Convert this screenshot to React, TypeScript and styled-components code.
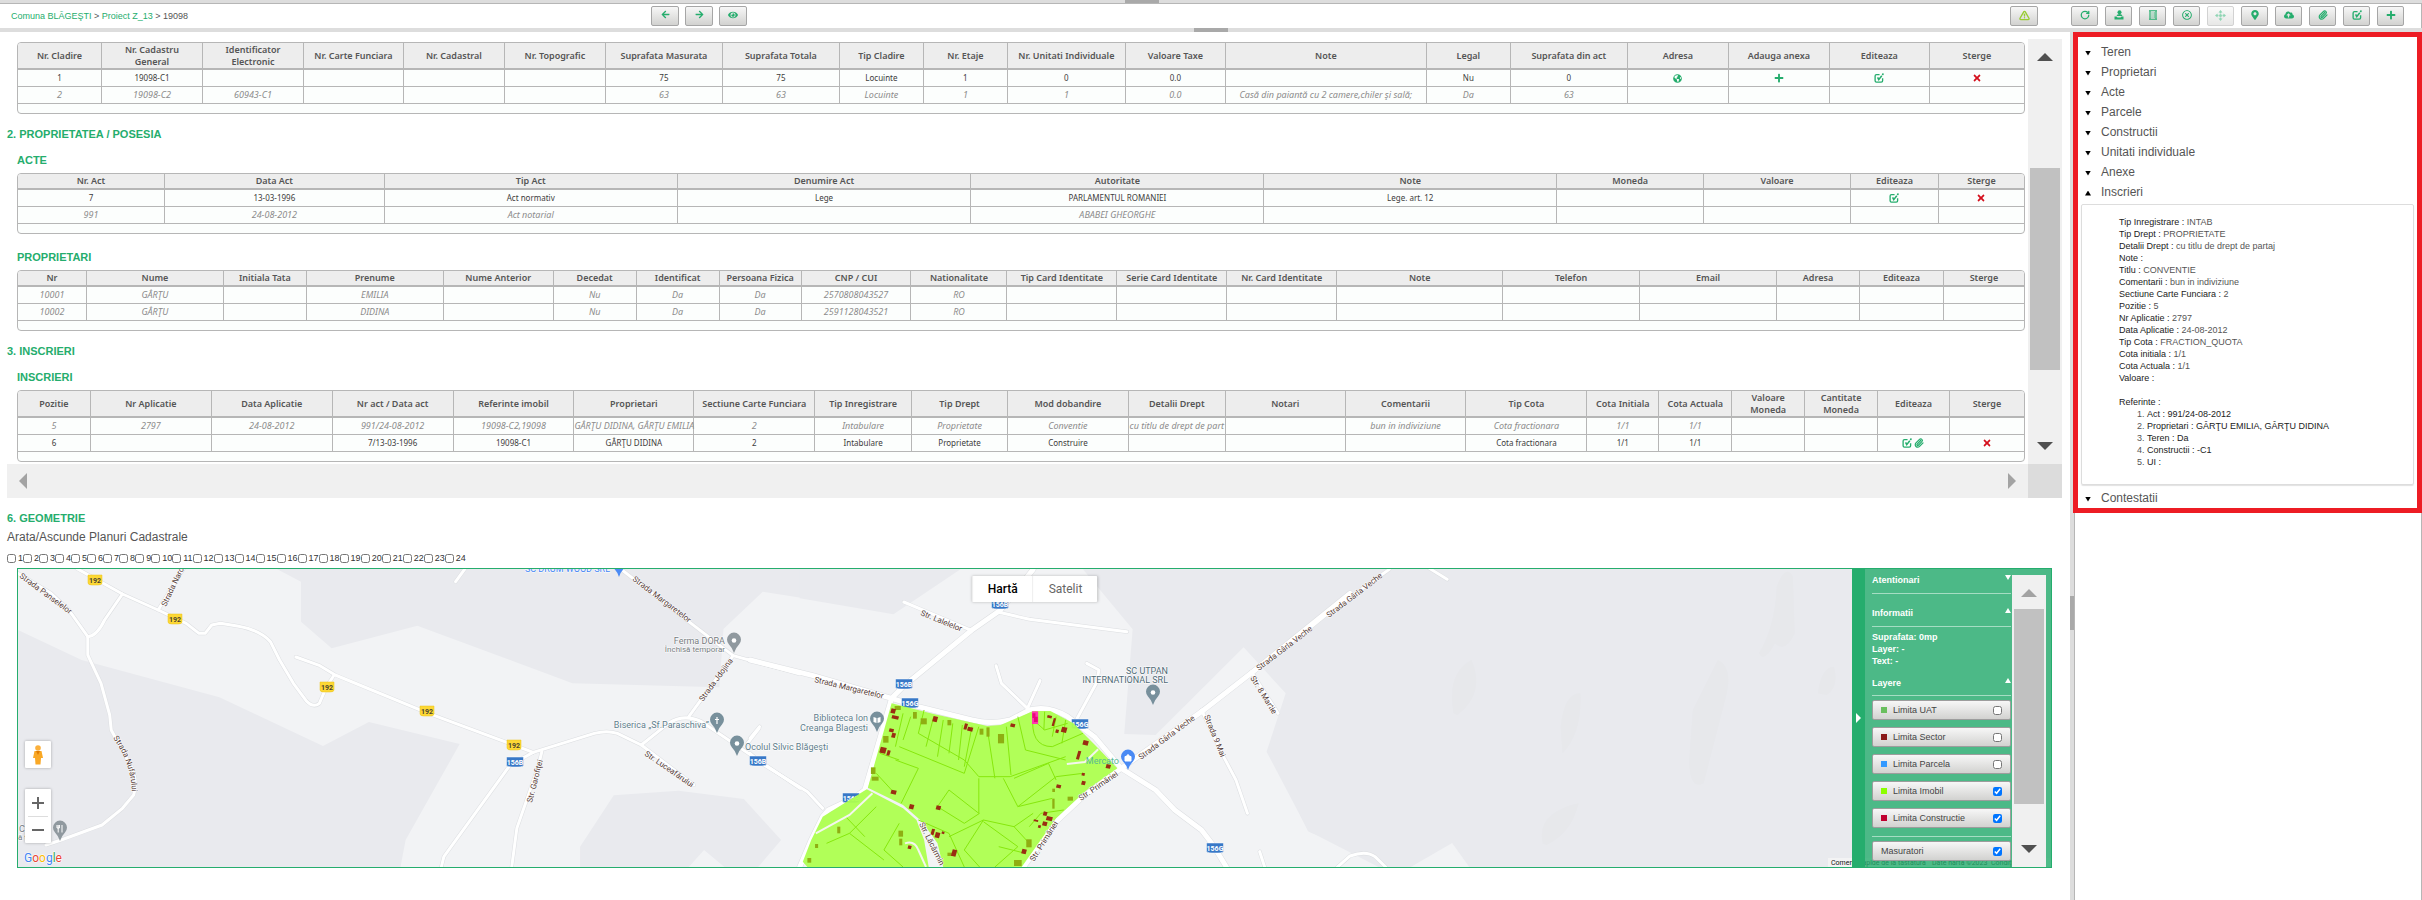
import React, { useState } from "react";
import type { ReactNode } from "react";
import styled, { createGlobalStyle, css } from "styled-components";
import {
  FaArrowLeft,
  FaArrowRight,
  FaCloudUploadAlt,
  FaEye,
  FaGlobeAmericas,
  FaMapMarkerAlt,
  FaPlus,
  FaRegTimesCircle,
  FaTimes,
} from "react-icons/fa";
import { Paperclip, RotateCw, TriangleAlert } from "lucide-react";

const green = "#25ad6d";
const line = "#b6b6b6";

const GlobalStyle = createGlobalStyle`
  * { box-sizing: border-box; }
  body { margin: 0; background: #fff; color: #555; font: 12px/16px "Liberation Sans", Arial, sans-serif; }
  button { font: inherit; color: inherit; padding: 0; cursor: pointer; }
  h2, h3, h4, ul, ol, p { margin: 0; }
`;

/* ---------- shell ---------- */

const Page = styled.div`
  display: flex;
  flex-direction: column;
  min-height: 100vh;
`;

const Splitter = styled.div<{ $lined?: boolean }>`
  display: flex;
  justify-content: center;
  height: 4px;
  background: #ddd;
  ${(p) => p.$lined && css`border-bottom: 1px solid ${line}; padding-right: 138px;`}
`;

const Grip = styled.span`
  width: 34px;
  background: #a9a9a9;
`;

const TopBar = styled.header`
  display: flex;
  align-items: center;
  height: 24px;
  padding: 0 17px 0 11px;
  border-right: 1px solid ${line};
`;

const Crumbs = styled.nav`
  flex: 0 0 640px;
  font-size: 9px;
  line-height: 12px;
  a { color: ${green}; text-decoration: none; }
`;

const Tools = styled.div<{ $gap: number; $apart?: boolean }>`
  display: flex;
  gap: ${(p) => p.$gap}px;
  ${(p) => p.$apart && css`margin-left: auto; margin-right: 33px;`}
`;

const ToolButton = styled.button<{ $wide?: boolean; $tone?: string }>`
  display: flex;
  justify-content: center;
  align-items: flex-start;
  width: ${(p) => (p.$wide ? 28 : 27)}px;
  height: 20px;
  padding-top: 3px;
  border: 1px solid #a6a6a6;
  border-radius: 2px;
  background: linear-gradient(#f7f7f7, #d2d2d0);
  color: ${(p) => p.$tone ?? green};
  &:disabled { opacity: 0.5; }
`;

const Main = styled.main`
  display: flex;
  flex: 1;
`;

const Content = styled.div`
  flex: 1;
  min-width: 0;
  padding: 7px 8px 0 7px;
`;

const Divider = styled.div`
  position: relative;
  width: 3px;
  background: #ddd;
`;

const SideGrip = styled.span`
  position: absolute;
  top: 564px;
  left: 0;
  width: 4px;
  height: 34px;
  background: #a9a9a9;
`;

/* ---------- scrolling box ---------- */

const ScrollBox = styled.div`
  display: grid;
  grid-template-columns: 1fr 34px;
  grid-template-rows: auto 34px;
`;

const ScrollBody = styled.div`
  min-width: 0;
  padding: 3px 3px 2px 10px;
`;

const VBar = styled.div`
  display: flex;
  flex-direction: column;
  align-items: center;
  justify-content: space-between;
  padding: 14px 0;
  background: #f0f0f0;
`;

const HBar = styled.div`
  display: flex;
  align-items: center;
  justify-content: space-between;
  padding: 0 12px;
  background: #f0f0f0;
`;

const Corner = styled.div`
  background: #dcdcdc;
`;

const Thumb = styled.span<{ $size: number }>`
  width: 30px;
  flex: ${(p) => p.$size} 0 0;
  background: #c1c1c1;
`;

const Space = styled.span<{ $grow: number }>`
  flex: ${(p) => p.$grow} 0 0;
`;

const Arrow = styled.button<{ $dir: "up" | "down" | "left" | "right"; $size?: number; $color?: string }>`
  width: 0;
  height: 0;
  background: none;
  border: ${(p) => p.$size ?? 8}px solid transparent;
  ${(p) => {
    const c = p.$color ?? "#505050";
    const side = { up: "bottom", down: "top", left: "right", right: "left" }[p.$dir];
    const back = { up: "top", down: "bottom", left: "left", right: "right" }[p.$dir];
    return css`border-${side}-color: ${c}; border-${back}-width: 0;`;
  }}
`;

/* ---------- tables ---------- */

const SectionTitle = styled.h2`
  margin: 13px 0 0 -10px;
  color: ${green};
  font-size: 11px;
  line-height: 14px;
`;

const GeoTitle = styled(SectionTitle)`
  margin-left: 0;
`;

const TableTitle = styled.h3<{ $far?: boolean }>`
  margin: ${(p) => (p.$far ? 16 : 12)}px 0 6px;
  color: ${green};
  font-size: 11px;
  line-height: 14px;
`;

const TableFrame = styled.div`
  padding-bottom: 9px;
  border: 1px solid ${line};
  border-radius: 4px;
  background: #fcfefd;
  overflow: hidden;
`;

const DataTable = styled.table`
  width: 100%;
  table-layout: fixed;
  border-collapse: separate;
  border-spacing: 0;
  font-family: "Noto Sans", "Open Sans", sans-serif;
`;

const Th = styled.th<{ $tall?: boolean }>`
  height: ${(p) => (p.$tall ? 27 : 16)}px;
  padding: 0;
  border-right: 1px solid ${line};
  border-bottom: 2px solid ${line};
  background: #ededed;
  color: #555;
  font-size: 9px;
  font-weight: 600;
  line-height: 12px;
  &:last-child { border-right: 0; }
`;

const Td = styled.td`
  height: 17px;
  padding: 0;
  border-right: 1px solid ${line};
  border-bottom: 1px solid ${line};
  line-height: 12px;
  text-align: center;
  white-space: nowrap;
  &:last-child { border-right: 0; }
`;

const Tr = styled.tr<{ $muted?: boolean }>`
  color: ${(p) => (p.$muted ? "#8c8c8c" : "#3c3c3c")};
  font-size: ${(p) => (p.$muted ? 9 : 8)}px;
  font-style: ${(p) => (p.$muted ? "italic" : "normal")};
`;

const Actions = styled.span`
  display: flex;
  justify-content: center;
  gap: 2px;
`;

const IconButton = styled.button<{ $danger?: boolean }>`
  display: flex;
  border: 0;
  background: none;
  color: ${(p) => (p.$danger ? "#d40f1c" : green)};
`;

/* ---------- geometry ---------- */

const GeoLabel = styled.p`
  margin-top: 4px;
`;

const PlanRow = styled.div`
  display: flex;
  margin-top: 7px;
  margin-bottom: 4px;
  font-size: 9px;
  line-height: 12px;
  color: #333;
`;

const Plan = styled.label`
  display: flex;
  align-items: center;
  gap: 2px;
`;

const Tick = styled.input`
  width: 9px;
  height: 9px;
  margin: 0;
`;

const MapFrame = styled.section`
  position: relative;
  margin: 0 10px;
  border: 1px solid ${green};
  height: 300px;
  overflow: hidden;
`;

const MapArt = styled.svg`
  display: block;
  width: 100%;
  height: 100%;
`;

const MapType = styled.div`
  position: absolute;
  top: 7px;
  left: 50%;
  transform: translateX(-50%);
  display: flex;
  border-radius: 1px;
  background: #fff;
  box-shadow: 0 0 3px rgba(0, 0, 0, 0.25);
  font: 12px/26px Roboto, sans-serif;
`;

const TypeButton = styled.button<{ $active?: boolean }>`
  padding: 0 15px;
  border: 0;
  border-left: 1px solid #eee;
  background: none;
  color: ${(p) => (p.$active ? "#000" : "#666")};
  font-weight: ${(p) => (p.$active ? 500 : 400)};
`;

const MapControls = styled.div`
  position: absolute;
  left: 7px;
  bottom: 24px;
  display: flex;
  flex-direction: column;
  gap: 21px;
`;

const ControlCard = styled.div`
  display: flex;
  flex-direction: column;
  align-items: center;
  width: 26px;
  border-radius: 1px;
  background: #fff;
  box-shadow: 0 0 3px rgba(0, 0, 0, 0.3);
`;

const ControlButton = styled.button`
  display: flex;
  align-items: center;
  justify-content: center;
  width: 20px;
  height: 27px;
  border: 0;
  background: none;
  & + & { border-top: 1px solid #ddd; }
`;

const LayerPanel = styled.aside`
  position: absolute;
  top: 0;
  right: 0;
  bottom: 0;
  display: flex;
  width: 199px;
  background: rgba(36, 173, 109, 0.8);
  color: #fff;
`;

const PanelHandle = styled.div`
  display: flex;
  align-items: center;
  justify-content: center;
  width: 13px;
  background: ${green};
`;

const PanelBody = styled.div`
  flex: 1;
  padding: 3px 0 0 7px;
`;

const PanelHead = styled.h4<{ $gap?: number; $rule?: number }>`
  display: flex;
  justify-content: space-between;
  margin-top: ${(p) => p.$gap ?? 0}px;
  padding-bottom: ${(p) => p.$rule ?? 5}px;
  border-bottom: 1px solid #a5ddc3;
  font-size: 9px;
  line-height: 16px;
`;

const PanelMark = styled.span<{ $open?: boolean }>`
  width: 6px;
  height: 5px;
  margin-top: 3px;
  background: #fff;
  clip-path: ${(p) => (p.$open ? "polygon(50% 0, 100% 100%, 0 100%)" : "polygon(0 0, 100% 0, 50% 100%)")};
`;

const PanelInfo = styled.div`
  padding-top: 4px;
  font-size: 9px;
  font-weight: 700;
  line-height: 12px;
`;

const LayerRow = styled.label`
  display: flex;
  align-items: center;
  height: 20px;
  margin-top: 7px;
  padding: 0 8px;
  border: 1px solid #9d9d9d;
  border-radius: 2px;
  background: linear-gradient(#f7f7f7, #d2d2d0);
  color: #444;
  font-size: 9px;
  line-height: 12px;
  ${PanelHead} + &, hr + & { margin-top: 4px; }
`;

const Swatch = styled.span<{ $color: string }>`
  width: 6px;
  height: 6px;
  margin-right: 6px;
  background: ${(p) => p.$color};
`;

const LayerTick = styled(Tick)`
  margin-left: auto;
`;

const PanelRule = styled.hr`
  height: 1px;
  margin: 8px 0 0;
  border: 0;
  background: #a5ddc3;
`;

const PanelScroll = styled(VBar)`
  width: 34px;
  margin: 6px 5px 0 1px;
`;

/* ---------- side panel ---------- */

const Side = styled.aside`
  display: flex;
  flex-direction: column;
  width: 349px;
`;

const SideBox = styled.div`
  padding: 5px 3px 0;
  border: 5px solid #ed1c24;
`;

const SideRest = styled.div`
  flex: 1;
  border-left: 1px solid #ddd;
  border-right: 1px solid ${line};
  box-shadow: inset 1px 0 ${line};
`;

const SideItem = styled.button<{ $open?: boolean }>`
  display: flex;
  align-items: center;
  gap: 10px;
  width: 100%;
  height: 20px;
  padding-left: 4px;
  border: 0;
  background: none;
  text-align: left;
  &::before {
    content: "";
    width: 6px;
    height: 5px;
    margin-top: 2px;
    background: #000;
    clip-path: ${(p) => (p.$open ? "polygon(50% 0, 100% 100%, 0 100%)" : "polygon(0 0, 100% 0, 50% 100%)")};
  }
`;

const SideCard = styled.div`
  margin: 2px 0 3px;
  padding: 11px 0 16px 37px;
  border: 1px solid #ddd;
  border-radius: 2px;
  box-shadow: 0 1px 1px #e2e2e2;
  font-size: 9px;
  line-height: 12px;
  color: #555;
  b { color: #222; font-weight: 400; }
`;

const RefTitle = styled.p`
  margin-top: 12px;
`;

const RefList = styled.ol`
  padding-left: 28px;
`;

/* ---------- small icons ---------- */

const EditIcon = ({ size = 10 }: { size?: number }) => (
  <svg width={size} height={size} viewBox="0 0 18 18" fill="none" stroke="currentColor" strokeWidth="2.400">
    <path d="M10 3H4.500Q2 3 2 5.500V14Q2 16.500 4.500 16.500H13Q15.500 16.500 15.500 14V9.500" />
    <path d="M6.500 8L8.500 12L14 5" strokeWidth="2.800" />
    <path d="M15 3.500L17 1" strokeWidth="2.800" />
  </svg>
);

const PersonTray = () => (
  <svg width="10" height="10" viewBox="0 0 20 20" fill="currentColor">
    <circle cx="11" cy="4.500" r="4" />
    <path d="M5 12Q6 8 11 8Q16 8 17 12Z" />
    <path d="M1 13H5L7 15H13L15 13H19V19H1Z" />
  </svg>
);

const ListIcon = () => (
  <svg width="10" height="10" viewBox="0 0 20 20" fill="none" stroke="currentColor" strokeWidth="2.400">
    <path d="M2 1.500H18M2 18.500H18M4 2V18M16 2V18M7 6H9M11 6H14M7 10H9M11 10H14M7 14H9M11 14H14" />
  </svg>
);

const MoveIcon = () => (
  <svg width="11" height="11" viewBox="0 0 22 22" fill="currentColor">
    <path d="M11 0L15 5H12.500V7H9.500V5H7ZM11 22L15 17H12.500V15H9.500V17H7ZM0 11L5 7V9.500H7V12.500H5V15ZM22 11L17 7V9.500H15V12.500H17V15Z" />
    <circle cx="11" cy="11" r="3" />
  </svg>
);

/* ---------- data ---------- */

type Cell = string | ReactNode;
interface Grid {
  name: string;
  tall?: boolean;
  cols: [string, number][];
  rows: { muted?: boolean; cells: Record<string, Cell> }[];
}

const edit = <IconButton aria-label="Editeaza"><EditIcon /></IconButton>;
const remove = <IconButton $danger aria-label="Sterge"><FaTimes size={10} /></IconButton>;

const cladiri: Grid = {
  name: "Cladiri",
  tall: true,
  cols: [
    ["Nr. Cladire", 84], ["Nr. Cadastru General", 101], ["Identificator Electronic", 101], ["Nr. Carte Funciara", 100],
    ["Nr. Cadastral", 101], ["Nr. Topografic", 101], ["Suprafata Masurata", 117], ["Suprafata Totala", 117],
    ["Tip Cladire", 84], ["Nr. Etaje", 84], ["Nr. Unitati Individuale", 118], ["Valoare Taxe", 100], ["Note", 201],
    ["Legal", 84], ["Suprafata din act", 117], ["Adresa", 101], ["Adauga anexa", 101], ["Editeaza", 100], ["Sterge", 94],
  ],
  rows: [
    {
      cells: {
        "Nr. Cladire": "1", "Nr. Cadastru General": "19098-C1", "Suprafata Masurata": "75", "Suprafata Totala": "75",
        "Tip Cladire": "Locuinte", "Nr. Etaje": "1", "Nr. Unitati Individuale": "0", "Valoare Taxe": "0.0", Legal: "Nu",
        "Suprafata din act": "0",
        Adresa: <IconButton aria-label="Adresa"><FaGlobeAmericas size={9} /></IconButton>,
        "Adauga anexa": <IconButton aria-label="Adauga anexa"><FaPlus size={10} /></IconButton>,
        Editeaza: edit, Sterge: remove,
      },
    },
    {
      muted: true,
      cells: {
        "Nr. Cladire": "2", "Nr. Cadastru General": "19098-C2", "Identificator Electronic": "60943-C1",
        "Suprafata Masurata": "63", "Suprafata Totala": "63", "Tip Cladire": "Locuinte", "Nr. Etaje": "1",
        "Nr. Unitati Individuale": "1", "Valoare Taxe": "0.0", Note: "Casă din paiantă cu 2 camere,chiler şi sală;",
        Legal: "Da", "Suprafata din act": "63",
      },
    },
  ],
};

const acte: Grid = {
  name: "Acte",
  cols: [
    ["Nr. Act", 147], ["Data Act", 220], ["Tip Act", 293], ["Denumire Act", 294], ["Autoritate", 293], ["Note", 293],
    ["Moneda", 147], ["Valoare", 147], ["Editeaza", 88], ["Sterge", 85],
  ],
  rows: [
    {
      cells: {
        "Nr. Act": "7", "Data Act": "13-03-1996", "Tip Act": "Act normativ", "Denumire Act": "Lege",
        Autoritate: "PARLAMENTUL ROMANIEI", Note: "Lege. art. 12", Editeaza: edit, Sterge: remove,
      },
    },
    { muted: true, cells: { "Nr. Act": "991", "Data Act": "24-08-2012", "Tip Act": "Act notarial", Autoritate: "ABABEI GHEORGHE" } },
  ],
};

const proprietari: Grid = {
  name: "Proprietari",
  cols: [
    ["Nr", 69], ["Nume", 137], ["Initiala Tata", 83], ["Prenume", 137], ["Nume Anterior", 110], ["Decedat", 83],
    ["Identificat", 83], ["Persoana Fizica", 82], ["CNP / CUI", 110], ["Nationalitate", 96], ["Tip Card Identitate", 110],
    ["Serie Card Identitate", 110], ["Nr. Card Identitate", 110], ["Note", 166], ["Telefon", 137], ["Email", 137],
    ["Adresa", 83], ["Editeaza", 84], ["Sterge", 80],
  ],
  rows: [
    ["10001", "EMILIA", "2570808043527"],
    ["10002", "DIDINA", "2591128043521"],
  ].map(([nr, prenume, cnp]) => ({
    muted: true,
    cells: {
      Nr: nr, Nume: "GÂRŢU", Prenume: prenume, Decedat: "Nu", Identificat: "Da", "Persoana Fizica": "Da",
      "CNP / CUI": cnp, Nationalitate: "RO",
    },
  })),
};

const inscrieri: Grid = {
  name: "Inscrieri",
  tall: true,
  cols: [
    ["Pozitie", 73], ["Nr Aplicatie", 121], ["Data Aplicatie", 121], ["Nr act / Data act", 121], ["Referinte imobil", 121],
    ["Proprietari", 120], ["Sectiune Carte Funciara", 121], ["Tip Inregistrare", 97], ["Tip Drept", 96],
    ["Mod dobandire", 121], ["Detalii Drept", 97], ["Notari", 120], ["Comentarii", 121], ["Tip Cota", 121],
    ["Cota Initiala", 72], ["Cota Actuala", 73], ["Valoare Moneda", 73], ["Cantitate Moneda", 73], ["Editeaza", 72], ["Sterge", 74],
  ],
  rows: [
    {
      muted: true,
      cells: {
        Pozitie: "5", "Nr Aplicatie": "2797", "Data Aplicatie": "24-08-2012", "Nr act / Data act": "991/24-08-2012",
        "Referinte imobil": "19098-C2,19098", Proprietari: "GÂRŢU DIDINA, GÂRŢU EMILIA", "Sectiune Carte Funciara": "2",
        "Tip Inregistrare": "Intabulare", "Tip Drept": "Proprietate", "Mod dobandire": "Conventie",
        "Detalii Drept": "cu titlu de drept de part", Comentarii: "bun in indiviziune", "Tip Cota": "Cota fractionara",
        "Cota Initiala": "1/1", "Cota Actuala": "1/1",
      },
    },
    {
      cells: {
        Pozitie: "6", "Nr act / Data act": "7/13-03-1996", "Referinte imobil": "19098-C1", Proprietari: "GÂRŢU DIDINA",
        "Sectiune Carte Funciara": "2", "Tip Inregistrare": "Intabulare", "Tip Drept": "Proprietate",
        "Mod dobandire": "Construire", "Tip Cota": "Cota fractionara", "Cota Initiala": "1/1", "Cota Actuala": "1/1",
        Editeaza: <>{edit}<IconButton aria-label="Ataseaza"><Paperclip size={10} strokeWidth={3} /></IconButton></>,
        Sterge: remove,
      },
    },
  ],
};

const details: [string, string][] = [
  ["Tip Inregistrare", "INTAB"], ["Tip Drept", "PROPRIETATE"], ["Detalii Drept", "cu titlu de drept de partaj"],
  ["Note", ""], ["Titlu", "CONVENTIE"], ["Comentarii", "bun in indiviziune"], ["Sectiune Carte Funciara", "2"],
  ["Pozitie", "5"], ["Nr Aplicatie", "2797"], ["Data Aplicatie", "24-08-2012"], ["Tip Cota", "FRACTION_QUOTA"],
  ["Cota initiala", "1/1"], ["Cota Actuala", "1/1"], ["Valoare", ""],
];

const references = [
  "Act : 991/24-08-2012",
  "Proprietari : GÂRŢU EMILIA, GÂRŢU DIDINA",
  "Teren : Da",
  "Constructii : -C1",
  "UI :",
];

const layers: [string, string, boolean][] = [
  ["Limita UAT", "#6abf5e", false],
  ["Limita Sector", "#8b1a1a", false],
  ["Limita Parcela", "#3399ff", false],
  ["Limita Imobil", "#8cff00", true],
  ["Limita Constructie", "#c0002f", true],
];

function GridTable({ grid }: { grid: Grid }) {
  const total = grid.cols.reduce((sum, [, w]) => sum + w, 0);
  return (
    <TableFrame>
      <DataTable aria-label={grid.name}>
        <colgroup>
          {grid.cols.map(([name, w]) => (
            <col key={name} style={{ width: `${(w / total) * 100}%` }} />
          ))}
        </colgroup>
        <thead>
          <tr>
            {grid.cols.map(([name]) => (
              <Th key={name} $tall={grid.tall}>
                {/(Cadastru|Identificator|Valoare Moneda|Cantitate)/.test(name) ? (
                  <>{name.slice(0, name.lastIndexOf(" "))}<br />{name.slice(name.lastIndexOf(" ") + 1)}</>
                ) : name}
              </Th>
            ))}
          </tr>
        </thead>
        <tbody>
          {grid.rows.map((row, i) => (
            <Tr key={i} $muted={row.muted}>
              {grid.cols.map(([name]) => {
                const cell = row.cells[name];
                return <Td key={name}>{cell && typeof cell !== "string" ? <Actions>{cell}</Actions> : cell}</Td>;
              })}
            </Tr>
          ))}
        </tbody>
      </DataTable>
    </TableFrame>
  );
}

/* ---------- map drawing ---------- */

// The terrain is drawn as three sheets, each with its own grid units.
const west = "translate(0 560) scale(0.5102 0.33333)";
const centre = "translate(750 560) scale(0.38265 0.33333)";
const east = "translate(1300 560) scale(0.35714 0.33333)";

const westRoads = [
  "M150 25L240 102L310 150L365 190L390 220H402L415 195L432 190L465 198Q510 210 530 245L548 300L575 370L600 422Q614 445 626 430L640 380L655 345",
  "M580 291L627 317L657 345L840 460L1045 577",
  "M240 102L205 180Q190 228 172 230L135 150L100 100L35 40",
  "M172 230V285L198 370L215 465L218 510L250 600Q272 650 262 705L240 745L200 795L120 840L90 855",
  "M310 150L360 25",
  "M1045 577L1000 615L870 890L865 921",
  "M1045 577L1165 520Q1190 510 1210 520L1257 555L1360 675",
  "M1062 575L1055 620L1013 805L1003 921",
  "M1257 555L1310 490Q1340 460 1375 485L1568 685",
  "M1350 470L1437 287L1350 185L1215 25",
  "M1437 287L1568 342",
  "M1488 505L1465 550",
  "M893 65L912 25",
];
const centreRoads = [
  "M0 580L30 610L150 695L190 745",
  "M402 126L580 212",
  "M645 155L730 178L985 215",
  "M643 317L657 370L725 445L758 362",
  "M880 310L912 330L905 370L855 475",
  "M1310 335L1380 460",
  "M1180 450L1240 595L1270 660L1300 760",
  "M0 535L25 500",
  "M1332 875L1345 921",
];
const centreMain = [
  "M0 300L165 347L370 415L440 440L580 480Q630 495 680 480L730 450Q780 435 830 470L900 530L970 625L1060 690L1110 750L1180 810L1210 855L1245 921",
  "M740 28L655 150L580 210L400 380L370 415L300 690L270 715L205 750L190 770L160 840L130 921",
  "M970 625L870 710L800 785L715 921",
  "M970 625L1180 455L1320 330L1568 100",
];
const parcels =
  "M455 450L440 520L560 600L598 650L680 650L825 590M390 560L560 640L598 500M620 505L640 655M670 500L682 645M700 470L720 570L825 600M740 460Q730 560 790 560L870 520M750 490L770 510L830 490M770 455L768 510M800 470L790 530M825 480L815 550M598 655V760L520 690L490 740L560 790L600 760M662 655L700 740L790 715M700 740L800 650L870 640M690 655L780 610L800 660M440 780L520 820L560 921M520 830L610 780L690 800L740 760M610 780L560 870L600 921M610 785L700 860L640 921M690 800L730 850M400 460L380 560M420 470L400 540M480 470L460 560M505 480L490 590M530 490L520 580M555 495L545 600M580 500L560 620M380 600L440 625L395 730M340 580L390 600M330 640L370 690M650 860L720 880M730 800L760 760L820 750M330 740L260 820L350 900M200 850L260 820M390 790L350 870L400 921M250 770L300 830";
const buildings: [number, number, number, number][] = [
  [370, 445, 12, 14], [372, 465, 18, 10], [365, 505, 12, 10], [372, 518, 10, 14], [342, 560, 16, 18], [360, 570, 8, 16],
  [480, 468, 12, 16], [562, 490, 8, 18], [570, 500, 14, 12], [682, 490, 12, 10], [778, 465, 12, 8], [794, 474, 6, 24],
  [816, 500, 14, 16], [800, 508, 8, 10], [872, 540, 14, 14], [858, 572, 8, 26], [932, 612, 12, 12], [868, 638, 8, 8],
  [868, 662, 10, 12], [802, 673, 12, 10], [370, 689, 14, 12], [418, 732, 12, 14], [488, 736, 12, 12], [476, 806, 8, 18],
  [486, 816, 12, 16], [502, 814, 7, 7], [768, 754, 10, 12], [776, 768, 16, 12], [766, 784, 12, 12], [742, 778, 12, 5],
  [754, 795, 7, 8], [530, 868, 12, 20], [414, 856, 9, 10], [712, 866, 12, 14],
];
const sheds: [number, number, number, number][] = [
  [378, 438, 16, 12], [426, 456, 10, 20], [446, 475, 16, 18], [516, 480, 10, 16], [600, 506, 10, 18], [618, 502, 8, 28],
  [648, 522, 16, 28], [348, 528, 14, 20], [316, 622, 12, 20], [318, 650, 18, 12], [830, 710, 14, 12], [790, 686, 7, 10],
  [790, 716, 6, 30], [388, 812, 12, 18], [390, 836, 8, 20], [516, 878, 12, 10], [722, 838, 14, 24], [690, 900, 20, 18],
  [228, 800, 8, 20], [170, 852, 8, 12], [150, 894, 10, 14],
];

const streets: [string, number, number, number, number][] = [
  ["Strada Panselelor", 19, 577, 69, 614],
  ["Strada Narc", 166, 607, 185, 567],
  ["Strada Margaretelor", 632, 580, 690, 624],
  ["Strada Jdojina", 703, 702, 733, 661],
  ["Str. Luceafărului", 644, 755, 692, 788],
  ["Str. Garofiţei", 532, 803, 543, 760],
  ["Str. Lalelelor", 920, 615, 964, 633],
  ["Strada Margaretelor", 814, 682, 884, 699],
  ["Strada Gârla Veche", 1259, 671, 1314, 629],
  ["Strada Gârla Veche", 1141, 760, 1197, 718],
  ["Strada Gârla Veche", 1329, 618, 1384, 576],
  ["Str. 8 Martie", 1250, 678, 1273, 715],
  ["Strada 9 Mai", 1204, 716, 1221, 758],
  ["Str. Primăriei", 1081, 801, 1119, 775],
  ["Str. Primăriei", 1034, 862, 1058, 824],
  ["Str. Lăcărmin", 919, 824, 941, 868],
];

const Street = ({ text, x1, y1, x2, y2 }: { text: string; x1: number; y1: number; x2: number; y2: number }) => (
  <text transform={`translate(${x1} ${y1}) rotate(${(Math.atan2(y2 - y1, x2 - x1) * 180) / Math.PI})`}>{text}</text>
);

const Shield = ({ x, y, text, county }: { x: number; y: number; text: string; county?: boolean }) => {
  const w = county ? 14 : 17;
  return (
    <g>
      <path
        d={`M${x - w / 2} ${y - 5}H${x + w / 2}V${y + 3}Q${x + w / 2} ${y + 5} ${x + 3} ${y + 5}H${x - 3}Q${x - w / 2} ${y + 5} ${x - w / 2} ${y + 3}Z`}
        fill={county ? "#fdd835" : "#3878c7"}
        stroke={county ? "#e9c11c" : "#fff"}
        strokeWidth="0.5"
      />
      <text x={x} y={y + 3} textAnchor="middle" fontSize="7" fontWeight="700" fill={county ? "#4a4430" : "#fff"}>{text}</text>
    </g>
  );
};

const Pin = ({ x, y, color, children }: { x: number; y: number; color: string; children?: ReactNode }) => (
  <g transform={`translate(${x} ${y})`}>
    <path d="M0 19Q-1.500 14 -5 10.500A7 7 0 1 1 5 10.500Q1.500 14 0 19Z" fill={color} />
    {children ?? <circle cy="6.500" r="2.300" fill="#fff" />}
  </g>
);

function VillageMap() {
  return (
    <MapArt viewBox="18 569 2033 298" preserveAspectRatio="xMinYMin slice" fontFamily="Roboto, sans-serif" role="img" aria-label="Harta">
      <rect x="18" y="569" width="2033" height="298" fill="#f2f3f5" />
      <g fill="#e9eaee">
        <path transform={west} d="M540 25L590 65V185L650 265L818 197L1122 370L1410 382L1418 207L1495 95L1620 125V25ZM35 210L160 300L430 412L633 558L723 486L901 552L795 840L785 921H35ZM1137 921V860L1203 706L1330 692L1458 717L1531 840L1486 921H1420L1380 870L1350 921Z" />
        <path transform={centre} d="M130 28H550L375 163L130 115ZM870 28L1000 208L978 522L1060 525L1290 262L1400 400L1350 575L1460 815L1568 865V28Z" />
        <path transform={east} d="M0 25H2200V921H220L22 812L0 765Z" />
      </g>
      <path transform={east} d="M310 921L426 849L474 921Z" fill="#f2f3f5" />
      <g fill="#e6e7ea" opacity="0.5">
        <path transform={east} d="M1335 80Q1360 10 1380 50L1385 220Q1360 280 1330 250Q1300 310 1285 280Q1330 200 1335 80ZM1450 400Q1460 320 1495 320Q1510 380 1475 405ZM1100 450L1170 300Q1210 320 1195 400L1130 670Q1090 690 1090 600ZM730 500Q740 400 785 400Q790 520 735 580ZM680 850Q660 760 780 730Q760 820 690 855ZM430 460Q410 340 480 300Q520 400 440 465Z" />
      </g>
      <g fill="none" strokeLinecap="round" strokeLinejoin="round">
        {[["#dcdee1", 1], ["#fff", 0]].map(([color, extra]) => (
          <g key={color as string} stroke={color as string}>
            <g transform={west} strokeWidth={3 + (extra as number)}>
              {westRoads.map((d) => <path key={d} d={d} vectorEffect="non-scaling-stroke" />)}
            </g>
            <g transform={centre} strokeWidth={3 + (extra as number)}>
              {centreRoads.map((d) => <path key={d} d={d} vectorEffect="non-scaling-stroke" />)}
            </g>
            <g transform={centre} strokeWidth={5 + (extra as number)}>
              {centreMain.map((d) => <path key={d} d={d} vectorEffect="non-scaling-stroke" />)}
            </g>
            <g transform={east} strokeWidth={3 + (extra as number)}>
              <path d="M0 228L72 165L250 28M362 25L412 58M105 921L140 888Q185 870 210 890L240 921" vectorEffect="non-scaling-stroke" />
            </g>
          </g>
        ))}
      </g>

      <Shield x={1000} y={604} text="156B" />
      <Shield x={904} y={684} text="156B" />
      <Shield x={910} y={703} text="156G" />
      <Shield x={1080} y={724} text="156G" />
      <Shield x={851} y={798} text="156B" />
      <Shield x={1215} y={848} text="156G" />
      <Shield x={758} y={761} text="156B" />
      <Shield x={515} y={762} text="156B" />
      <Shield county x={95} y={580} text="192" />
      <Shield county x={175} y={619} text="192" />
      <Shield county x={327} y={687} text="192" />
      <Shield county x={427} y={711} text="192" />
      <Shield county x={514} y={745} text="192" />

      <g transform={centre}>
        <path
          d="M370 430L480 462L620 498L655 495L740 453H785L845 490L910 565L960 625L880 690L800 775L710 921H505L490 850L450 785L400 735L308 683Z"
          fill="#adff4f" fillOpacity="0.95"
        />
        <path d="M305 688L325 700L400 745L435 780L455 840L467 921H150L138 905L160 840L190 770Z" fill="#adff4f" fillOpacity="0.95" />
        <path d={parcels} fill="none" stroke="#86e80c" vectorEffect="non-scaling-stroke" />
        <path d="M320 700L260 765L172 820M405 850Q430 840 440 870L460 921M828 612L875 606L910 568" fill="none" stroke="#f4f6ee" strokeWidth="2" vectorEffect="non-scaling-stroke" />
        {sheds.map(([x, y, w, h]) => <rect key={`${x}-${y}`} x={x} y={y} width={w} height={h} fill="#8fae12" />)}
        {buildings.map(([x, y, w, h]) => (
          <rect key={`${x}-${y}`} x={x} y={y} width={w} height={h} fill="#9a2d12" transform={`rotate(14 ${x} ${y})`} />
        ))}
        <rect x="737" y="454" width="16" height="38" fill="#ff38b0" />
        <path d="M738 460H746V470H752V486H742V474H738Z" fill="#e8087c" />
      </g>

      <g fontSize="8" fill="#553b37" stroke="#fff" strokeWidth="1" paintOrder="stroke" strokeLinejoin="round">
        {streets.map(([text, x1, y1, x2, y2]) => (
          <Street key={`${text}${x1}`} text={text} x1={x1} y1={y1} x2={x2} y2={y2} />
        ))}
        <path id="nufarului" d="M113 738Q133 765 132 800" fill="none" stroke="none" />
        <text><textPath href="#nufarului">Strada Nufărului</textPath></text>
      </g>

      <g fontSize="9" fill="#607d8b" stroke="#fff" strokeWidth="1" paintOrder="stroke" strokeLinejoin="round">
        <g fill="#757b80">
          <text x="725" y="644" textAnchor="end">Ferma DORA</text>
          <text x="725" y="652" textAnchor="end" fontSize="8">Închisă temporar</text>
          <text x="19" y="832">C</text>
          <text x="18" y="840" fontSize="8">ă t</text>
        </g>
        <text x="709" y="728" textAnchor="end">Biserica „Sf.Paraschiva”</text>
        <text x="745" y="750">Ocolul Silvic Blăgeşti</text>
        <text x="868" y="721" textAnchor="end">Biblioteca Ion</text>
        <text x="868" y="731" textAnchor="end">Creanga Blagesti</text>
        <g fill="#4e6a76">
          <text x="1168" y="674" textAnchor="end">SC UTPAN</text>
          <text x="1168" y="683" textAnchor="end">INTERNATIONAL SRL</text>
        </g>
        <text x="610" y="572" textAnchor="end" fill="#4285f4">SC DRUM WOOD SRL</text>
      </g>
      <text x="1119" y="764" textAnchor="end" fontSize="9" fill="#58b894">Mercato</text>

      <Pin x={734} y={634} color="#90999f" />
      <Pin x={717} y={714} color="#78909c">
        <path d="M0 3V10M-2 5.500H2" stroke="#fff" strokeWidth="1.200" />
      </Pin>
      <Pin x={737} y={737} color="#78909c" />
      <Pin x={877} y={713} color="#78909c">
        <path d="M-3.500 4L-0.500 5V10L-3.500 9ZM3.500 4L0.500 5V10L3.500 9Z" fill="#fff" />
      </Pin>
      <Pin x={1153} y={686} color="#78909c" />
      <Pin x={1128} y={751} color="#4a8af4">
        <path d="M-3 5.500H3V10H-3ZM-1.500 5.500Q0 1.500 1.500 5.500" fill="#fff" stroke="#fff" />
      </Pin>
      <Pin x={60} y={822} color="#90999f">
        <path d="M-1.800 3V10.500M-3 3V6H-0.600V3M2 3V10.500" stroke="#fff" fill="none" />
      </Pin>
      <Pin x={619} y={558} color="#4a8af4" />

      <text x="24" y="862" fontSize="12" stroke="#fff" strokeWidth="1" paintOrder="stroke">
        <tspan fill="#4285f4">G</tspan><tspan fill="#ea4335">o</tspan><tspan fill="#fbbc05">o</tspan><tspan fill="#4285f4">g</tspan><tspan fill="#34a853">l</tspan><tspan fill="#ea4335">e</tspan>
      </text>
      <rect x="1828" y="858" width="223" height="9" fill="#f5f5f5" fillOpacity="0.8" />
      <g fontSize="7" fill="#111">
        <text x="1831" y="865">Comenzi rapide de la tastatură</text>
        <text x="1932" y="865">Date hartă ©2023</text>
        <text x="1991" y="865">Condiţii</text>
      </g>
    </MapArt>
  );
}

/* ---------- page ---------- */

export default function App() {
  const [openItem, setOpenItem] = useState("Inscrieri");
  const item = (name: string) => (
    <SideItem key={name} $open={openItem === name} aria-expanded={openItem === name} onClick={() => setOpenItem(name)}>
      {name}
    </SideItem>
  );

  return (
    <Page>
      <GlobalStyle />
      <Splitter $lined><Grip /></Splitter>
      <TopBar>
        <Crumbs>
          <a href="#comuna">Comuna BLĂGEŞTI</a> &gt; <a href="#proiect">Proiect Z_13</a> &gt; 19098
        </Crumbs>
        <Tools $gap={6}>
          <ToolButton $wide aria-label="Inapoi"><FaArrowLeft size={9} /></ToolButton>
          <ToolButton $wide aria-label="Inainte"><FaArrowRight size={9} /></ToolButton>
          <ToolButton $wide aria-label="Vizualizeaza"><FaEye size={10} /></ToolButton>
        </Tools>
        <Tools $gap={6} $apart>
          <ToolButton $wide $tone="#98cc33" aria-label="Avertizari"><TriangleAlert size={11} strokeWidth={3} /></ToolButton>
        </Tools>
        <Tools $gap={7}>
          <ToolButton aria-label="Reincarca"><RotateCw size={10} strokeWidth={3} /></ToolButton>
          <ToolButton aria-label="Persoana"><PersonTray /></ToolButton>
          <ToolButton aria-label="Lista"><ListIcon /></ToolButton>
          <ToolButton aria-label="Inchide"><FaRegTimesCircle size={10} /></ToolButton>
          <ToolButton disabled aria-label="Muta"><MoveIcon /></ToolButton>
          <ToolButton aria-label="Locatie"><FaMapMarkerAlt size={10} /></ToolButton>
          <ToolButton aria-label="Incarca"><FaCloudUploadAlt size={10} /></ToolButton>
          <ToolButton aria-label="Atasamente"><Paperclip size={10} strokeWidth={3} /></ToolButton>
          <ToolButton aria-label="Editeaza"><EditIcon /></ToolButton>
          <ToolButton aria-label="Adauga"><FaPlus size={10} /></ToolButton>
        </Tools>
      </TopBar>
      <Splitter><Grip /></Splitter>

      <Main>
        <Content>
          <ScrollBox>
            <ScrollBody>
              <GridTable grid={cladiri} />
              <SectionTitle>2. PROPRIETATEA / POSESIA</SectionTitle>
              <TableTitle>ACTE</TableTitle>
              <GridTable grid={acte} />
              <TableTitle $far>PROPRIETARI</TableTitle>
              <GridTable grid={proprietari} />
              <SectionTitle>3. INSCRIERI</SectionTitle>
              <TableTitle>INSCRIERI</TableTitle>
              <GridTable grid={inscrieri} />
            </ScrollBody>
            <VBar>
              <Arrow $dir="up" aria-label="Sus" />
              <Space $grow={107} />
              <Thumb $size={202} />
              <Space $grow={72} />
              <Arrow $dir="down" aria-label="Jos" />
            </VBar>
            <HBar>
              <Arrow $dir="left" $color="#a3a3a3" aria-label="Stanga" />
              <Arrow $dir="right" $color="#a3a3a3" aria-label="Dreapta" />
            </HBar>
            <Corner />
          </ScrollBox>

          <GeoTitle>6. GEOMETRIE</GeoTitle>
          <GeoLabel>Arata/Ascunde Planuri Cadastrale</GeoLabel>
          <PlanRow>
            {Array.from({ length: 24 }, (_, i) => i + 1).map((n) => (
              <Plan key={n}><Tick type="checkbox" />{n}</Plan>
            ))}
          </PlanRow>

          <MapFrame>
            <VillageMap />
            <MapType>
              <TypeButton $active>Hartă</TypeButton>
              <TypeButton>Satelit</TypeButton>
            </MapType>
            <MapControls>
              <ControlCard>
                <ControlButton aria-label="Street View">
                  <svg width="12" height="20" viewBox="0 0 12 20">
                    <circle cx="6" cy="3" r="2.800" fill="#fbb03b" />
                    <path d="M2.500 6H9.500L11 13H9L8.500 19.500H3.500L3 13H1Z" fill="#f9a825" />
                    <path d="M4 6H8L6 10Z" fill="#e07b00" />
                  </svg>
                </ControlButton>
              </ControlCard>
              <ControlCard>
                <ControlButton aria-label="Mareste">
                  <svg width="12" height="12" viewBox="0 0 12 12"><path d="M6 0V12M0 6H12" stroke="#666" strokeWidth="2" /></svg>
                </ControlButton>
                <ControlButton aria-label="Micsoreaza">
                  <svg width="12" height="12" viewBox="0 0 12 12"><path d="M0 6H12" stroke="#666" strokeWidth="2" /></svg>
                </ControlButton>
              </ControlCard>
            </MapControls>
            <LayerPanel>
              <PanelHandle><Arrow $dir="right" $size={5} $color="#fff" aria-label="Ascunde panoul" /></PanelHandle>
              <PanelBody>
                <PanelHead>Atentionari<PanelMark /></PanelHead>
                <PanelHead $gap={11}>Informatii<PanelMark $open /></PanelHead>
                <PanelInfo>
                  <div>Suprafata: 0mp</div>
                  <div>Layer: -</div>
                  <div>Text: -</div>
                </PanelInfo>
                <PanelHead $gap={8} $rule={4}>Layere<PanelMark $open /></PanelHead>
                {layers.map(([name, color, on]) => (
                  <LayerRow key={name}>
                    <Swatch $color={color} />
                    {name}
                    <LayerTick type="checkbox" defaultChecked={on} />
                  </LayerRow>
                ))}
                <PanelRule />
                <LayerRow>
                  Masuratori
                  <LayerTick type="checkbox" defaultChecked />
                </LayerRow>
              </PanelBody>
              <PanelScroll>
                <Arrow $dir="up" $color="#a3a3a3" aria-label="Sus" />
                <Space $grow={12} />
                <Thumb $size={196} />
                <Space $grow={41} />
                <Arrow $dir="down" aria-label="Jos" />
              </PanelScroll>
            </LayerPanel>
          </MapFrame>
        </Content>

        <Divider><SideGrip /></Divider>

        <Side>
          <SideBox>
            {["Teren", "Proprietari", "Acte", "Parcele", "Constructii", "Unitati individuale", "Anexe", "Inscrieri"].map(item)}
            {openItem === "Inscrieri" && (
              <SideCard>
                {details.map(([label, value]) => (
                  <div key={label}><b>{label} :</b> {value}</div>
                ))}
                <RefTitle><b>Referinte :</b></RefTitle>
                <RefList>
                  {references.map((r) => <li key={r}><b>{r}</b></li>)}
                </RefList>
              </SideCard>
            )}
            {item("Contestatii")}
          </SideBox>
          <SideRest />
        </Side>
      </Main>
    </Page>
  );
}
